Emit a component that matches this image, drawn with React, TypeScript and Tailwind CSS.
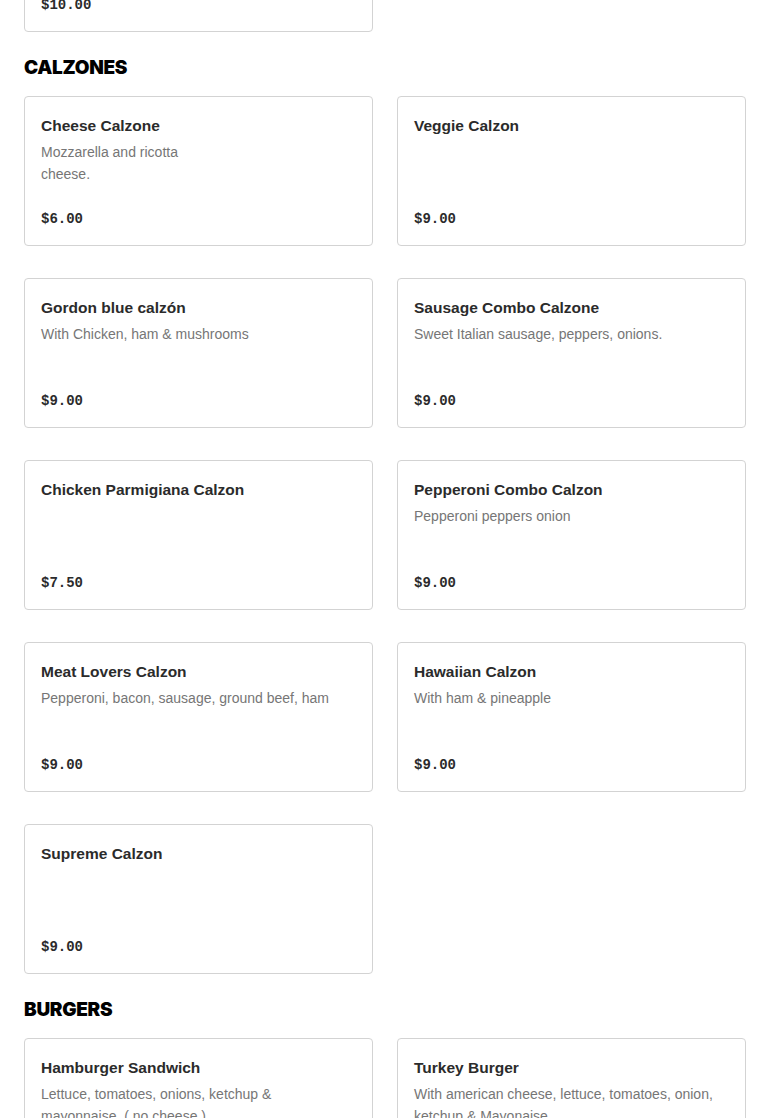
type Item = { name: string; desc?: string; price: string };

const calzones: Item[] = [
  { name: "Cheese Calzone", desc: "Mozzarella and ricotta\ncheese.", price: "$6.00" },
  { name: "Veggie Calzon", price: "$9.00" },
  { name: "Gordon blue calzón", desc: "With Chicken, ham & mushrooms", price: "$9.00" },
  { name: "Sausage Combo Calzone", desc: "Sweet Italian sausage, peppers, onions.", price: "$9.00" },
  { name: "Chicken Parmigiana Calzon", price: "$7.50" },
  { name: "Pepperoni Combo Calzon", desc: "Pepperoni peppers onion", price: "$9.00" },
  { name: "Meat Lovers Calzon", desc: "Pepperoni, bacon, sausage, ground beef, ham", price: "$9.00" },
  { name: "Hawaiian Calzon", desc: "With ham & pineapple", price: "$9.00" },
  { name: "Supreme Calzon", price: "$9.00" },
];

const burgers: Item[] = [
  { name: "Hamburger Sandwich", desc: "Lettuce, tomatoes, onions, ketchup &\nmayonnaise. ( no cheese )", price: "$7.00" },
  { name: "Turkey Burger", desc: "With american cheese, lettuce, tomatoes, onion,\nketchup & Mayonaise", price: "$8.00" },
];

const MenuCard = ({ item }: { item: Item }) => (
  <div className="h-[150px] flex flex-col border border-[#d3d3d3] rounded bg-white p-4">
    <h3 className="pt-px text-[15.5px] leading-6 font-semibold text-[#2b2b2b]">
      {item.name}
    </h3>
    {item.desc && (
      <p className="mt-[3px] text-sm leading-[22px] text-[#767676] whitespace-pre-line">
        {item.desc}
      </p>
    )}
    <div className="mt-auto font-['Liberation_Mono',monospace] font-bold text-sm leading-5 text-[#2b2b2b]">
      {item.price}
    </div>
  </div>
);

const Section = ({ title, items }: { title: string; items: Item[] }) => (
  <section className="pt-6">
    <h2 className="text-[19px] leading-6 font-black uppercase text-black mb-4 font-['Inter',sans-serif] tracking-[-0.3px]">
      {title}
    </h2>
    <div className="grid grid-cols-2 gap-x-6 gap-y-8">
      {items.map((item) => (
        <MenuCard key={item.name} item={item} />
      ))}
    </div>
  </section>
);

export default function App() {
  return (
    <div className="bg-white px-6 font-['Liberation_Sans',Arial,sans-serif] overflow-hidden h-[1118px]">
      {/* tail of previous section, scrolled past */}
      <div className="grid grid-cols-2 gap-x-6 -mt-[118px]">
        <MenuCard item={{ name: "Stromboli", price: "$10.00" }} />
      </div>

      <Section title="Calzones" items={calzones} />
      <Section title="Burgers" items={burgers} />
    </div>
  );
}
